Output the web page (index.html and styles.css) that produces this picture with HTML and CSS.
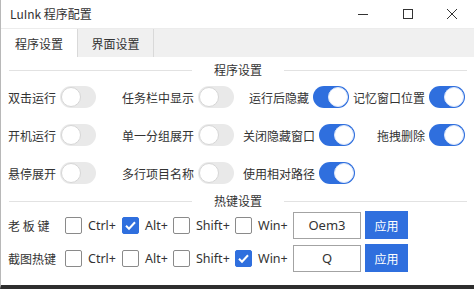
FILE: index.html
```html
<!DOCTYPE html>
<html lang="zh-CN">
<head>
<meta charset="utf-8">
<title>LuInk 程序配置</title>
<link rel="stylesheet" href="styles.css">
</head>
<body>
<div class="window">
  <div class="titlebar">
    <span class="title">LuInk 程序配置</span>
    <div class="controls">
      <span class="ctl ctl-min"><svg width="12" height="12" viewBox="0 0 12 12"><path d="M1 6.5h10" stroke="#333" stroke-width="1"/></svg></span>
      <span class="ctl ctl-max"><svg width="12" height="12" viewBox="0 0 12 12"><rect x="1.5" y="1.5" width="9" height="9" fill="none" stroke="#333" stroke-width="1"/></svg></span>
      <span class="ctl ctl-close"><svg width="12" height="12" viewBox="0 0 12 12"><path d="M1 1L11 11M11 1L1 11" stroke="#333" stroke-width="1"/></svg></span>
    </div>
  </div>
  <div class="tabs">
    <div class="tab active">程序设置</div>
    <div class="tab">界面设置</div>
  </div>
  <div class="content">
    <div class="section-head"><span class="line"></span><span class="head-text">程序设置</span><span class="line"></span></div>
    <div class="switch-grid">
      <div class="cell c1"><span>双击运行</span><span class="switch"></span></div>
      <div class="cell c2"><span>任务栏中显示</span><span class="switch"></span></div>
      <div class="cell c3"><span>运行后隐藏</span><span class="switch on"></span></div>
      <div class="cell c4"><span>记忆窗口位置</span><span class="switch on"></span></div>

      <div class="cell c1"><span>开机运行</span><span class="switch"></span></div>
      <div class="cell c2"><span>单一分组展开</span><span class="switch"></span></div>
      <div class="cell c3"><span>关闭隐藏窗口</span><span class="switch on"></span></div>
      <div class="cell c4"><span>拖拽删除</span><span class="switch on"></span></div>

      <div class="cell c1"><span>悬停展开</span><span class="switch"></span></div>
      <div class="cell c2"><span>多行项目名称</span><span class="switch"></span></div>
      <div class="cell c3"><span>使用相对路径</span><span class="switch on"></span></div>
    </div>
    <div class="section-head hot"><span class="line"></span><span class="head-text">热键设置</span><span class="line"></span></div>
    <div class="hot-row">
      <span class="hot-label">老 板 键</span>
      <span class="box"></span><span class="key k-ctrl">Ctrl+</span>
      <span class="box checked"><svg width="17" height="17" viewBox="0 0 17 17"><path d="M4 8.8l3 3 6-6.5" fill="none" stroke="#fff" stroke-width="2"/></svg></span><span class="key k-alt">Alt+</span>
      <span class="box"></span><span class="key k-shift">Shift+</span>
      <span class="box"></span><span class="key k-win">Win+</span>
      <span class="keybox">Oem3</span>
      <span class="apply">应用</span>
    </div>
    <div class="hot-row">
      <span class="hot-label">截图热键</span>
      <span class="box"></span><span class="key k-ctrl">Ctrl+</span>
      <span class="box"></span><span class="key k-alt">Alt+</span>
      <span class="box"></span><span class="key k-shift">Shift+</span>
      <span class="box checked"><svg width="17" height="17" viewBox="0 0 17 17"><path d="M4 8.8l3 3 6-6.5" fill="none" stroke="#fff" stroke-width="2"/></svg></span><span class="key k-win">Win+</span>
      <span class="keybox">Q</span>
      <span class="apply">应用</span>
    </div>
  </div>
</div>
</body>
</html>
```

FILE: styles.css
```css
* { box-sizing: border-box; }
html, body { margin: 0; padding: 0; background: #fff; }
body {
  font-family: "Noto Sans CJK SC", "Noto Sans", sans-serif;
  font-size: 12px;
  color: #333;
}
.window {
  width: 474px;
  height: 289px;
  display: flex;
  flex-direction: column;
  border-left: 1px solid #b8b8b8;
  border-bottom: 4px solid #2e2e2e;
  overflow: hidden;
}
.titlebar {
  height: 28px;
  display: flex;
  align-items: center;
  justify-content: space-between;
  padding-left: 9px;
  background: #fff;
}
.title { font-size: 12px; line-height: 14px; color: #333; }
.controls { display: flex; height: 28px; }
.ctl {
  width: 44px;
  display: flex;
  align-items: center;
  justify-content: center;
}
.ctl-min { margin-right: 1px; }
.tabs {
  height: 29px;
  background: #f0f0f0;
  display: flex;
  border-top: 1px solid #ececec;
}
.tab {
  width: 76px;
  display: flex;
  align-items: center;
  justify-content: center;
  border-right: 1px solid #d9d9d9;
  font-size: 12px;
  color: #333;
}
.tab.active { background: #fff; width: 77px; }
.content {
  flex: 1;
  display: flex;
  flex-direction: column;
  padding: 6px 0 0 0;
}
.section-head {
  display: flex;
  align-items: center;
  gap: 22px;
  padding: 0 7px 0 8px;
  height: 14px;
  line-height: 14px;
}
.section-head .line { flex: 1; height: 1px; background: #e2e2e2; }
.head-text { font-size: 12px; color: #333; }
.switch-grid {
  display: grid;
  grid-template-columns: 114px 114px 126px 103px;
  grid-auto-rows: 38px;
  padding-left: 7px;
  margin-top: 1px;
}
.cell { display: flex; align-items: center; gap: 4px; white-space: nowrap; }
.c1, .c2 { justify-content: flex-start; }
.c3 { justify-content: center; }
.c4 { justify-content: flex-end; }
.switch {
  position: relative;
  width: 36px;
  height: 22px;
  border-radius: 11px;
  background: #e9e9e9;
  flex: none;
}
.switch::after {
  content: "";
  position: absolute;
  left: 1px;
  top: 1px;
  width: 20px;
  height: 20px;
  border-radius: 50%;
  background: #fff;
  border: 1px solid #d6d6d6;
  box-sizing: border-box;
}
.switch.on { background: #2f6fde; }
.switch.on::after { left: 15px; border: 1.5px solid #dbe6fa; }
.section-head.hot { margin-top: 2px; margin-bottom: 3px; }
.hot-row {
  display: flex;
  align-items: center;
  height: 28px;
  padding-left: 7px;
  margin-bottom: 5px;
}
.hot-label { width: 57px; font-size: 12px; white-space: pre; }
.box {
  width: 17px;
  height: 17px;
  border: 1px solid #8a8a8a;
  border-radius: 2px;
  background: #fff;
  flex: none;
  display: flex;
}
.box.checked { background: #2f6fde; border-color: #2f6fde; }
.box.checked svg { margin: -1px; }
.key {
  font-family: "Noto Sans", "Open Sans", sans-serif;
  font-size: 12.5px;
  margin-left: 6px;
  color: #333;
}
.k-ctrl { width: 34px; }
.k-alt { width: 28px; }
.k-shift { width: 39px; }
.k-win { width: 35px; }
.keybox {
  width: 68px;
  height: 27px;
  border: 1px solid #a3a3a3;
  display: flex;
  align-items: center;
  justify-content: center;
  font-family: "Noto Sans", "Open Sans", sans-serif;
  font-size: 13px;
  color: #333;
}
.apply {
  width: 43px;
  height: 28px;
  margin-left: 4px;
  background: #2f6fde;
  color: #fff;
  display: flex;
  align-items: center;
  justify-content: center;
  font-size: 12px;
}
```
